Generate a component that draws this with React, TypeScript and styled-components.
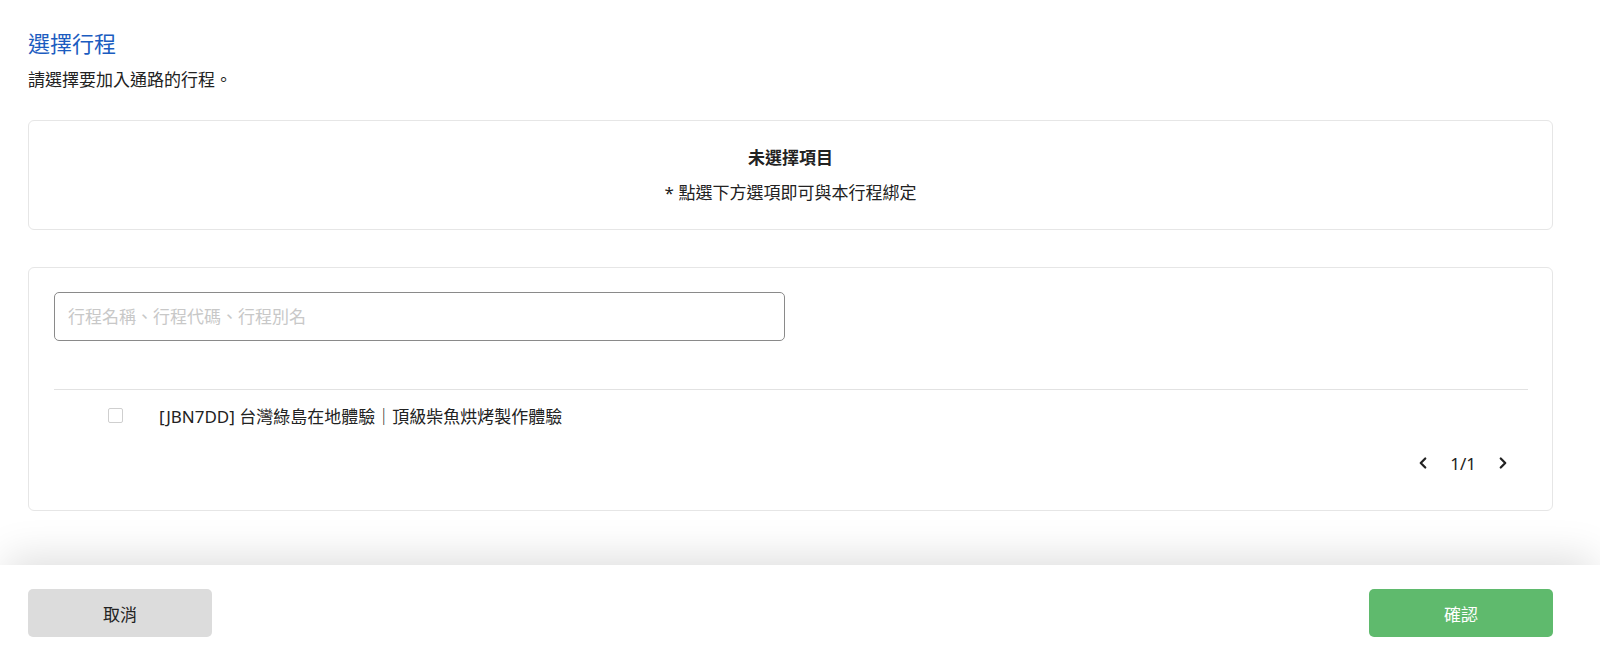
import React, { useState } from "react";
import styled, { createGlobalStyle } from "styled-components";
import { FiChevronLeft, FiChevronRight } from "react-icons/fi";

interface Tour {
  id: string;
  name: string;
}

const tours: Tour[] = [
  { id: "JBN7DD", name: "台灣綠島在地體驗｜頂級柴魚烘烤製作體驗" },
];

const GlobalStyle = createGlobalStyle`
  html, body {
    margin: 0;
    padding: 0;
    background: #fff;
    font-family: "Noto Sans", "Noto Sans CJK TC", sans-serif;
    color: #222;
  }
  * { box-sizing: border-box; }
`;

const Page = styled.div`
  display: flex;
  flex-direction: column;
  height: 100vh;
  overflow: hidden;
`;

const Content = styled.main`
  flex: 1;
  padding: 29px 47px 0 28px;
`;

const Title = styled.h2`
  margin: 0;
  font-size: 22px;
  line-height: 28px;
  font-weight: 400;
  color: #1b5cc0;
`;

const Subtitle = styled.p`
  margin: 11px 0 0;
  font-size: 17px;
  line-height: 24px;
`;

const Panel = styled.section<{ $gap: number }>`
  margin-top: ${(p) => p.$gap}px;
  border: 1px solid #e6e6e6;
  border-radius: 6px;
  background: #fff;
`;

const Summary = styled.div`
  display: flex;
  flex-direction: column;
  align-items: center;
  gap: 11px;
  padding: 25px 0 24px;
  font-size: 17px;
  line-height: 24px;
`;

const SummaryTitle = styled.div`
  font-weight: 700;
`;

const PickerBody = styled.div`
  padding: 24px 24px 24px 25px;
`;

const SearchInput = styled.input`
  display: block;
  width: 731px;
  height: 49px;
  padding: 0 13px;
  border: 1px solid #8a8a8a;
  border-radius: 5px;
  font-family: inherit;
  font-size: 17px;
  color: #222;
  outline: none;
  &::placeholder {
    color: #c8c8c8;
  }
`;

const List = styled.div`
  margin-top: 48px;
  border-top: 1px solid #e2e2e2;
`;

const Row = styled.label`
  display: grid;
  grid-template-columns: 105px 1fr;
  align-items: center;
  height: 50px;
  font-size: 17px;
  cursor: pointer;
`;

const Check = styled.span<{ $on: boolean }>`
  justify-self: start;
  margin-left: 54px;
  width: 15px;
  height: 15px;
  border: 1px solid #cfcfcf;
  border-radius: 2px;
  background: ${(p) => (p.$on ? "#5fb96c" : "#fff")};
`;

const Pager = styled.div`
  display: flex;
  justify-content: flex-end;
  align-items: center;
  gap: 12px;
  height: 46px;
  padding-right: 16px;
  font-size: 17px;
  color: #222;
  svg {
    font-size: 18px;
    stroke-width: 3;
    cursor: pointer;
  }
`;

const PageText = styled.span`
  padding: 0 6px;
`;

const Footer = styled.footer`
  flex: 0 0 96px;
  display: flex;
  justify-content: space-between;
  align-items: center;
  padding: 0 47px 0 28px;
  background: #fff;
  box-shadow: 0 -14px 40px -6px rgba(0, 0, 0, 0.13);
  position: relative;
`;

const Button = styled.button<{ $primary?: boolean }>`
  width: 184px;
  height: 48px;
  border: none;
  border-radius: 5px;
  font-family: inherit;
  font-size: 17px;
  cursor: pointer;
  background: ${(p) => (p.$primary ? "#5fba6d" : "#dcdcdc")};
  color: ${(p) => (p.$primary ? "#fff" : "#222")};
`;

const App: React.FC = () => {
  const [selected, setSelected] = useState<string | null>(null);
  const [query, setQuery] = useState("");

  return (
    <Page>
      <GlobalStyle />
      <Content>
        <Title>選擇行程</Title>
        <Subtitle>請選擇要加入通路的行程。</Subtitle>
        <Panel $gap={28}>
          <Summary>
            <SummaryTitle>未選擇項目</SummaryTitle>
            <div>* 點選下方選項即可與本行程綁定</div>
          </Summary>
        </Panel>
        <Panel $gap={37}>
          <PickerBody>
            <SearchInput
              value={query}
              onChange={(e) => setQuery(e.target.value)}
              placeholder="行程名稱、行程代碼、行程別名"
            />
            <List>
              {tours.map((t) => (
                <Row
                  key={t.id}
                  onClick={() => setSelected(selected === t.id ? null : t.id)}
                >
                  <Check $on={selected === t.id} />
                  <span>
                    [{t.id}] {t.name}
                  </span>
                </Row>
              ))}
            </List>
            <Pager>
              <FiChevronLeft />
              <PageText>1/1</PageText>
              <FiChevronRight />
            </Pager>
          </PickerBody>
        </Panel>
      </Content>
      <Footer>
        <Button>取消</Button>
        <Button $primary>確認</Button>
      </Footer>
    </Page>
  );
};

export default App;
